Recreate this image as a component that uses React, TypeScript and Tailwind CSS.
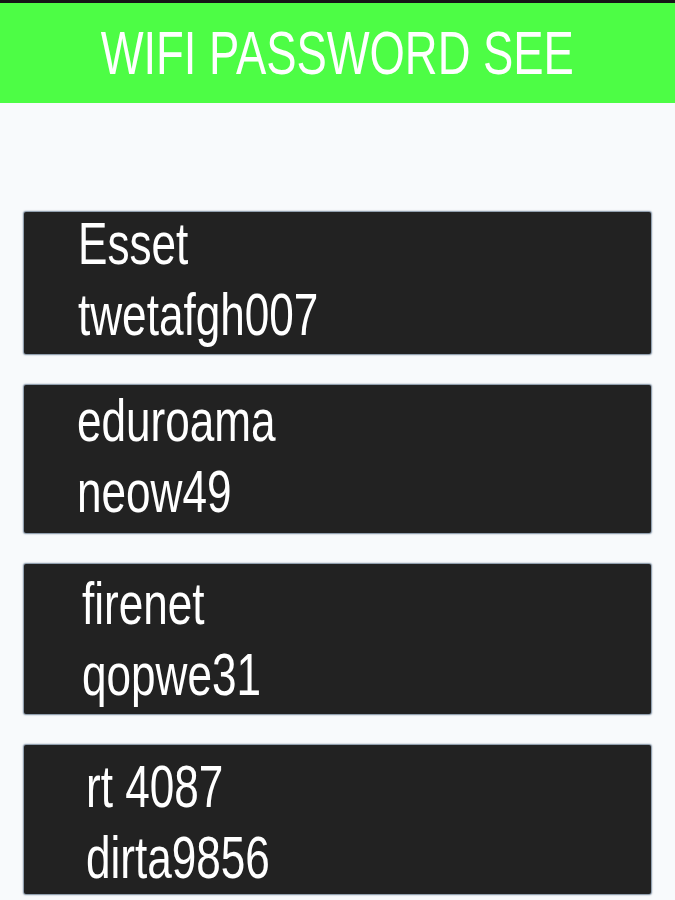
const networks = [
  { name: 'Esset', password: 'twetafgh007', card: 'h-[142px] pl-[54px] pt-[0px]' },
  { name: 'eduroama', password: 'neow49', card: 'h-[148px] pl-[53px] pt-[4px]' },
  { name: 'firenet', password: 'qopwe31', card: 'h-[150px] pl-[58px] pt-[8px]' },
  { name: 'rt 4087', password: 'dirta9856', card: 'h-[149px] pl-[62px] pt-[10px]' },
]

function NetworkCard({ name, password, card }: (typeof networks)[number]) {
  return (
    <div className={`${card} mx-[24px] rounded-[2px] bg-[#222222] shadow-[0_0_1.5px_1px_rgba(20,50,80,0.55)]`}>
      <div className="flex flex-col gap-[4px] text-white text-[60px]">
        <span className="block leading-[64px] origin-left scale-x-[0.735] whitespace-nowrap">{name}</span>
        <span className="block leading-[70px] origin-left scale-x-[0.735] whitespace-nowrap">{password}</span>
      </div>
    </div>
  )
}

export default function App() {
  return (
    <div
      className="w-[675px] h-[900px] bg-[#f8fafc] overflow-hidden"
      style={{ fontFamily: '"Liberation Sans", Arial, sans-serif' }}
    >
      <div className="h-[3px] bg-[#151515]" />
      <header className="h-[100px] bg-[#4dfd45] flex items-center justify-center">
        <h1 className="text-white text-[62px] leading-[100px] scale-x-[0.732] whitespace-nowrap">
          WIFI PASSWORD SEE
        </h1>
      </header>

      <div className="pt-[109px] flex flex-col gap-[31px]">
        {networks.map((n) => (
          <NetworkCard key={n.name} {...n} />
        ))}
      </div>
    </div>
  )
}
